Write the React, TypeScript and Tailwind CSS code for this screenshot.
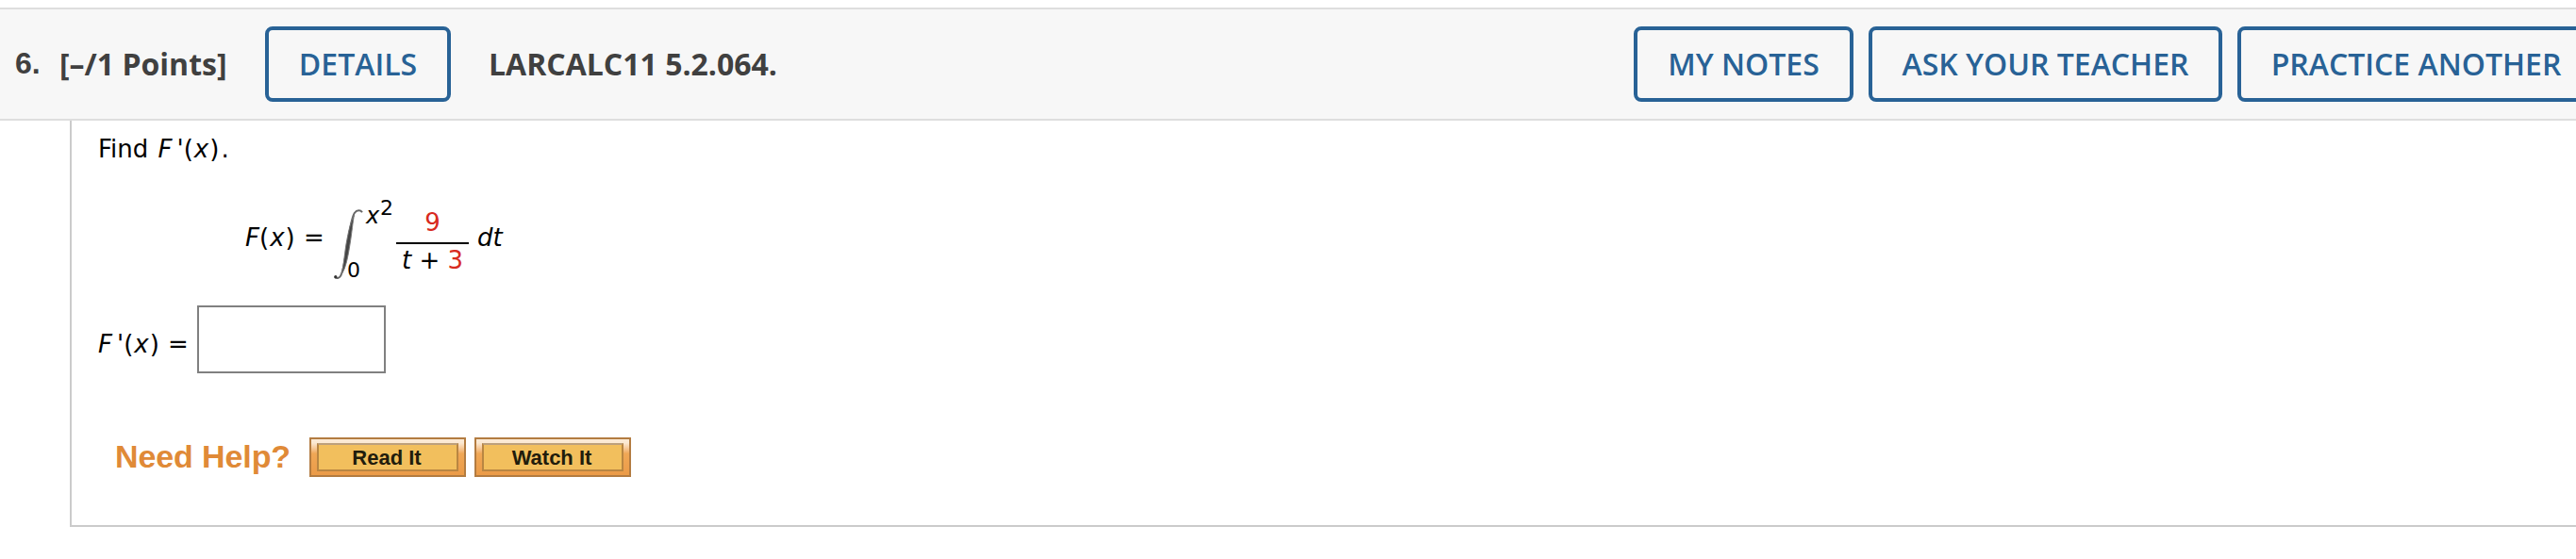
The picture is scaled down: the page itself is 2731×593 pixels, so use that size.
import type { ReactNode } from 'react';

const actions = [
  { label: 'MY NOTES', width: 'w-[233px]' },
  { label: 'ASK YOUR TEACHER', width: 'w-[375px]' },
  { label: 'PRACTICE ANOTHER', width: 'w-[379px]' },
];

const helpLinks = ['Read It', 'Watch It'];

function HeaderButton({ label, width }: { label: string; width: string }) {
  return (
    <button
      className={`${width} flex h-20 shrink-0 items-center justify-center whitespace-nowrap rounded-lg border-4 border-[#286296] font-semibold text-[#286296]`}
    >
      {label}
    </button>
  );
}

function HelpButton({ label }: { label: string }) {
  return (
    <button className="h-[42px] w-[166px] border-2 border-[#b37c41] bg-linear-to-b from-[#fbe9d3] from-10% via-[#f0a755] via-40% to-[#eb9b48] px-[6px] pt-1 pb-1">
      <span className="flex h-[30px] items-center justify-center border-2 border-[#b98642] border-t-[#bda07c] bg-[#f2bf5d] pt-[2px] pr-[2px] text-[22px] font-bold text-[#211c0c]">
        {label}
      </span>
    </button>
  );
}

function Prime() {
  return (
    <span>
      <i>F</i>
      <i className="ml-[5px]">'</i>
    </span>
  );
}

// "(x)" with a little air round the brackets
function Arg() {
  return (
    <span>
      <span className="mr-[1px]">(</span>
      <i>x</i>
      <span className="ml-[1px]">)</span>
    </span>
  );
}

function Red({ children }: { children: ReactNode }) {
  return <span className="text-[#d82a20]">{children}</span>;
}

function Integral() {
  return (
    <div className="relative ml-[11px] h-[76px] w-[66px]">
      <svg className="h-[76px] w-[32px]" viewBox="0 0 32 76" fill="none">
        <path
          d="M30 4.2C28.5 2 24.5 1.2 21.8 5C18.5 10 17 22 14.7 36C12.3 51 10.5 65 7.2 71.5C5.4 74.5 2.8 74.8 .8 73"
          stroke="#666"
          strokeWidth="2"
        />
        <path d="M21.5 7C17.5 14 15 27 13 38C11 51 10 63 8 70C12.5 64 15 51 17 38C19 26 20 14 21.5 7Z" fill="#444" stroke="#777" />
        <circle cx="1.8" cy="72.6" r="1.6" fill="#333" />
      </svg>
      <span className="absolute top-[-9px] left-[34px] text-[24px] leading-[34px]">
        <i>x</i>
      </span>
      <span className="absolute top-[-17px] left-[49px] text-[22px] leading-[34px]">2</span>
      <span className="absolute top-[49px] left-[14px] text-[22px] leading-[34px]">0</span>
    </div>
  );
}

export default function App() {
  return (
    <div className="h-[593px] w-full overflow-hidden bg-white pt-2 font-['DejaVu_Sans',sans-serif] text-[26px] leading-[34px] text-black">
      <header className="flex h-[120px] items-center border-y-2 border-[#dedede] bg-[#f7f7f7] pl-4 font-['Open_Sans',sans-serif] text-[32px] leading-[44px] whitespace-nowrap text-[#404040]">
        <span className="w-[47px] shrink-0 pb-[2px] font-['Liberation_Sans',sans-serif] font-bold">6.</span>
        <span className="w-[218px] shrink-0 font-bold">[–/1 Points]</span>
        <HeaderButton label="DETAILS" width="w-[197px]" />
        <span className="ml-10 w-[1214px] shrink-0 font-bold">LARCALC11 5.2.064.</span>
        <div className="flex shrink-0 gap-4">
          {actions.map((a) => (
            <HeaderButton key={a.label} label={a.label} width={a.width} />
          ))}
        </div>
      </header>

      <main className="ml-[74px] h-[431px] border-b-2 border-l-2 border-[#cbcbcb] pl-7">
        <p className="pt-[13px]">
          <span className="mr-[2px]">Find</span> <Prime />
          <Arg />
          <span className="ml-[2px]">.</span>
        </p>

        <div className="mt-[46px] flex h-[76px] pl-[156px]">
          <span className="mt-[14px] w-[83px] whitespace-nowrap">
            <i>F</i>
            <Arg /> <span className="ml-[1px]">=</span>
          </span>
          <Integral />
          <div className="mt-[2px] flex h-[70px] w-[77px] flex-col items-center">
            <span className="h-[38px] leading-[27px]">
              <Red>9</Red>
            </span>
            <div className="h-[2px] w-full shrink-0 bg-black" />
            <span className="whitespace-nowrap leading-[34px]">
              <i>t</i> + <Red>3</Red>
            </span>
          </div>
          <i className="mt-[14px] ml-[9px]">dt</i>
        </div>

        <div className="mt-[27px] flex h-[72px]">
          <span className="mt-[24px] w-[105px] whitespace-nowrap">
            <Prime />
            <Arg /> <span className="ml-[1px]">=</span>
          </span>
          <input className="h-[72px] w-[200px] border-2 border-[#808080] bg-white px-2 outline-none" />
        </div>

        <div className="mt-[68px] flex h-[42px] items-center pl-[18px] font-['Liberation_Sans',sans-serif]">
          <span className="w-[206px] pb-[2px] text-[34px] font-bold tracking-[-0.1px] whitespace-nowrap text-[#e08a37]">Need Help?</span>
          <div className="flex gap-[9px]">
            {helpLinks.map((label) => (
              <HelpButton key={label} label={label} />
            ))}
          </div>
        </div>
      </main>
    </div>
  );
}
